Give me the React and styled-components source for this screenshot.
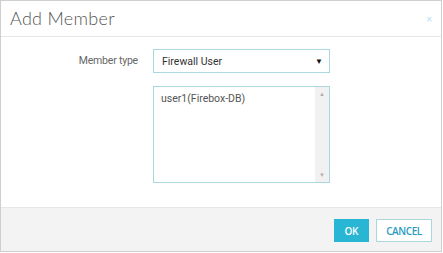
import styled, { createGlobalStyle } from "styled-components"

const Global = createGlobalStyle`
  html, body { margin: 0; padding: 0; background: #fff; }
  body { font-family: "Open Sans", "Liberation Sans", sans-serif; }
`

const App = () => {
  return (
    <>
      <Global />
      <Dialog>
        <Header>
          <Title>Add Member</Title>
          <Close>×</Close>
        </Header>
        <Body>
          <Row>
            <Label>Member type</Label>
            <Select>
              <span>Firewall User</span>
              <Caret>▼</Caret>
            </Select>
          </Row>
          <Row>
            <span />
            <ListBox>
              <ListItems>
                <div>user1(Firebox-DB)</div>
              </ListItems>
              <Scroll>
                <Arrow>▲</Arrow>
                <Arrow>▼</Arrow>
              </Scroll>
            </ListBox>
          </Row>
        </Body>
        <Footer>
          <Button primary>OK</Button>
          <Button>CANCEL</Button>
        </Footer>
      </Dialog>
    </>
  )
}

export default App

const Dialog = styled.div`
  width: 440px;
  height: 250px;
  border: 1px solid #cfcfcf;
  display: flex;
  flex-direction: column;
  background: #fff;
`

const Header = styled.div`
  height: 35px;
  border-bottom: 1px solid #e6e6e6;
  display: flex;
  align-items: center;
  justify-content: space-between;
  padding: 0 9px 0 9px;
`

const Title = styled.h2`
  margin: 0;
  font-family: "Lato", sans-serif;
  font-weight: 300;
  font-size: 18px;
  color: #555;
  letter-spacing: 0.3px;
  margin-top: -2px;
`

const Close = styled.span`
  font-family: "Liberation Sans", sans-serif;
  font-size: 10px;
  color: #b6def0;
  margin-top: 1px;
`

const Body = styled.div`
  flex: 1;
  display: flex;
  flex-direction: column;
  gap: 13px;
  padding-top: 12px;
`

const Row = styled.div`
  display: grid;
  grid-template-columns: 137px 177px;
  column-gap: 15px;
  align-items: center;
`

const Label = styled.label`
  text-align: right;
  font-family: "Roboto", sans-serif;
  font-size: 10.5px;
  letter-spacing: -0.2px;
  color: #666;
  margin-top: -2px;
`

const Select = styled.div`
  box-sizing: border-box;
  height: 24px;
  border: 1px solid #a9d9de;
  display: flex;
  align-items: center;
  justify-content: space-between;
  padding: 0 6px 0 8px;
  font-family: "Roboto", sans-serif;
  font-size: 10.5px;
  color: #333;
`

const Caret = styled.span`
  font-size: 8px;
  color: #111;
`

const ListBox = styled.div`
  box-sizing: border-box;
  height: 97px;
  border: 1px solid #a9d9de;
  display: flex;
`

const ListItems = styled.div`
  flex: 1;
  padding: 5px 7px;
  font-family: "Roboto", sans-serif;
  font-size: 10.5px;
  color: #555;
`

const Scroll = styled.div`
  width: 14px;
  background: #f1f1f1;
  display: flex;
  flex-direction: column;
  justify-content: space-between;
  align-items: center;
  padding: 3px 0;
`

const Arrow = styled.span`
  font-size: 6px;
  color: #b0b0b0;
  line-height: 8px;
`

const Footer = styled.div`
  height: 44px;
  border-top: 1px solid #e6e6e6;
  background: #f3f3f3;
  display: flex;
  align-items: center;
  justify-content: flex-end;
  gap: 7px;
  padding-right: 9px;
  padding-top: 2px;
  box-sizing: border-box;
`

const Button = styled.button`
  box-sizing: border-box;
  height: 23px;
  padding: 0 ${p => (p.primary ? "10px" : "8px")};
  min-width: ${p => (p.primary ? "34px" : "56px")};
  border: 1px solid ${p => (p.primary ? "#28b6d4" : "#a9d9de")};
  background: ${p => (p.primary ? "#28b6d4" : "#fff")};
  color: ${p => (p.primary ? "#fff" : "#2a9cc0")};
  font-family: "Open Sans", sans-serif;
  font-weight: 600;
  font-size: 10px;
  letter-spacing: -0.4px;
  cursor: pointer;
`
